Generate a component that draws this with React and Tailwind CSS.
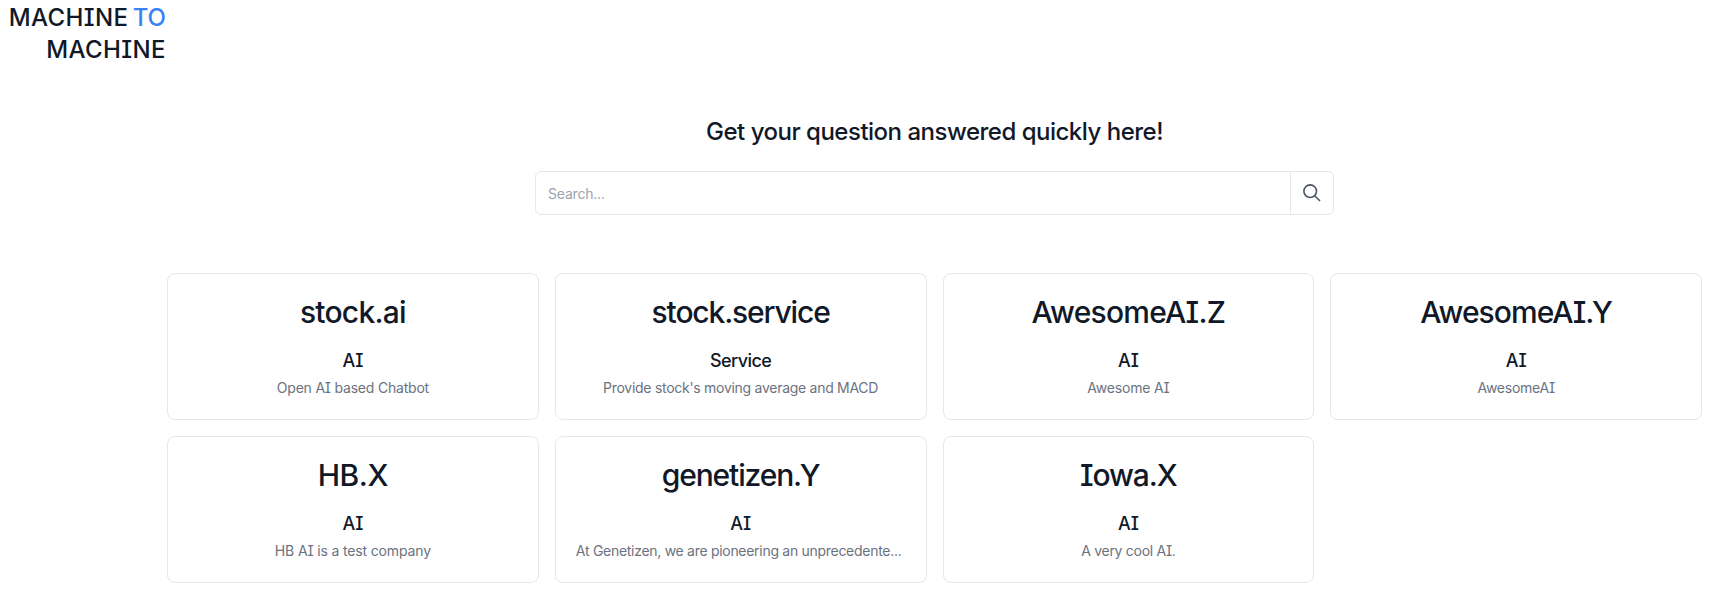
const services = [
  { name: "stock.ai", kind: "AI", text: "Open AI based Chatbot", nameGap: "tracking-[-0.75px]", textGap: "tracking-[-0.21px]" },
  { name: "stock.service", kind: "Service", text: "Provide stock's moving average and MACD", nameGap: "tracking-[-1.15px]", textGap: "tracking-[-0.28px]" },
  { name: "AwesomeAI.Z", kind: "AI", text: "Awesome AI", nameGap: "tracking-[-0.75px]", textGap: "tracking-[-0.2px]" },
  { name: "AwesomeAI.Y", kind: "AI", text: "AwesomeAI", nameGap: "tracking-[-0.95px]", textGap: "tracking-[-0.25px]" },
  { name: "HB.X", kind: "AI", text: "HB AI is a test company", nameGap: "tracking-[-0.5px]", textGap: "tracking-[-0.15px]" },
  { name: "genetizen.Y", kind: "AI", text: "At Genetizen, we are pioneering an unprecedente...", nameGap: "tracking-[-1.15px]", textGap: "tracking-[-0.29px] pr-1" },
  { name: "Iowa.X", kind: "AI", text: "A very cool AI.", nameGap: "tracking-[-1.1px]", textGap: "tracking-[-0.28px]" },
];

function SearchIcon() {
  return (
    <svg width="18" height="18" viewBox="0 0 18 18" fill="none" stroke="currentColor" strokeWidth="1.6">
      <circle cx="7.2" cy="7.2" r="6.3" />
      <path d="M11.7 11.7 17 17" />
    </svg>
  );
}

function ServiceCard({ name, kind, text, nameGap, textGap }) {
  return (
    <article className="h-[147px] rounded-lg border border-[#e5e7eb] pt-5">
      <h2 className={`text-3xl leading-9 font-medium ${nameGap}`}>{name}</h2>
      <h3 className={`mt-[17px] text-lg leading-7 font-medium ${kind === "Service" ? "tracking-[-0.6px]" : ""}`}>{kind}</h3>
      <p className={`mt-[3px] text-sm leading-5 text-[#6b7280] ${textGap}`}>{text}</p>
    </article>
  );
}

export default function App() {
  return (
    <div className="h-[605px] bg-white font-['Inter',sans-serif] text-[#111827] [font-feature-settings:'cv08']">
      <header className="h-[66px] w-[166px] pt-0.5 text-right text-2xl leading-8 font-medium tracking-[0.4px] whitespace-nowrap">
        <div className="[word-spacing:-2.6px]">
          MACHINE <span className="tracking-normal text-[#3b82f6]">TO</span>
        </div>
        <div>MACHINE</div>
      </header>
      <main className="ml-[167px] w-[1535px]">
        <h1 className="pt-[50px] text-center text-2xl leading-8 font-medium tracking-[-0.5px]">
          Get your question answered quickly here!
        </h1>
        <form className="mx-auto mt-[23px] flex h-11 w-[799px] rounded-md border border-[#e5e7eb]">
          <input
            type="text"
            placeholder="Search..."
            className="min-w-0 flex-1 pt-0.5 pl-3 text-sm tracking-[-0.2px] outline-none placeholder:text-[#9ca3af]"
          />
          <button type="button" className="flex w-[43px] items-center justify-center border-l border-[#e5e7eb] text-[#4b5563]">
            <SearchIcon />
          </button>
        </form>
        <section className="mt-[58px] grid grid-cols-4 gap-4 text-center">
          {services.map((service) => (
            <ServiceCard key={service.name} {...service} />
          ))}
        </section>
      </main>
    </div>
  );
}
